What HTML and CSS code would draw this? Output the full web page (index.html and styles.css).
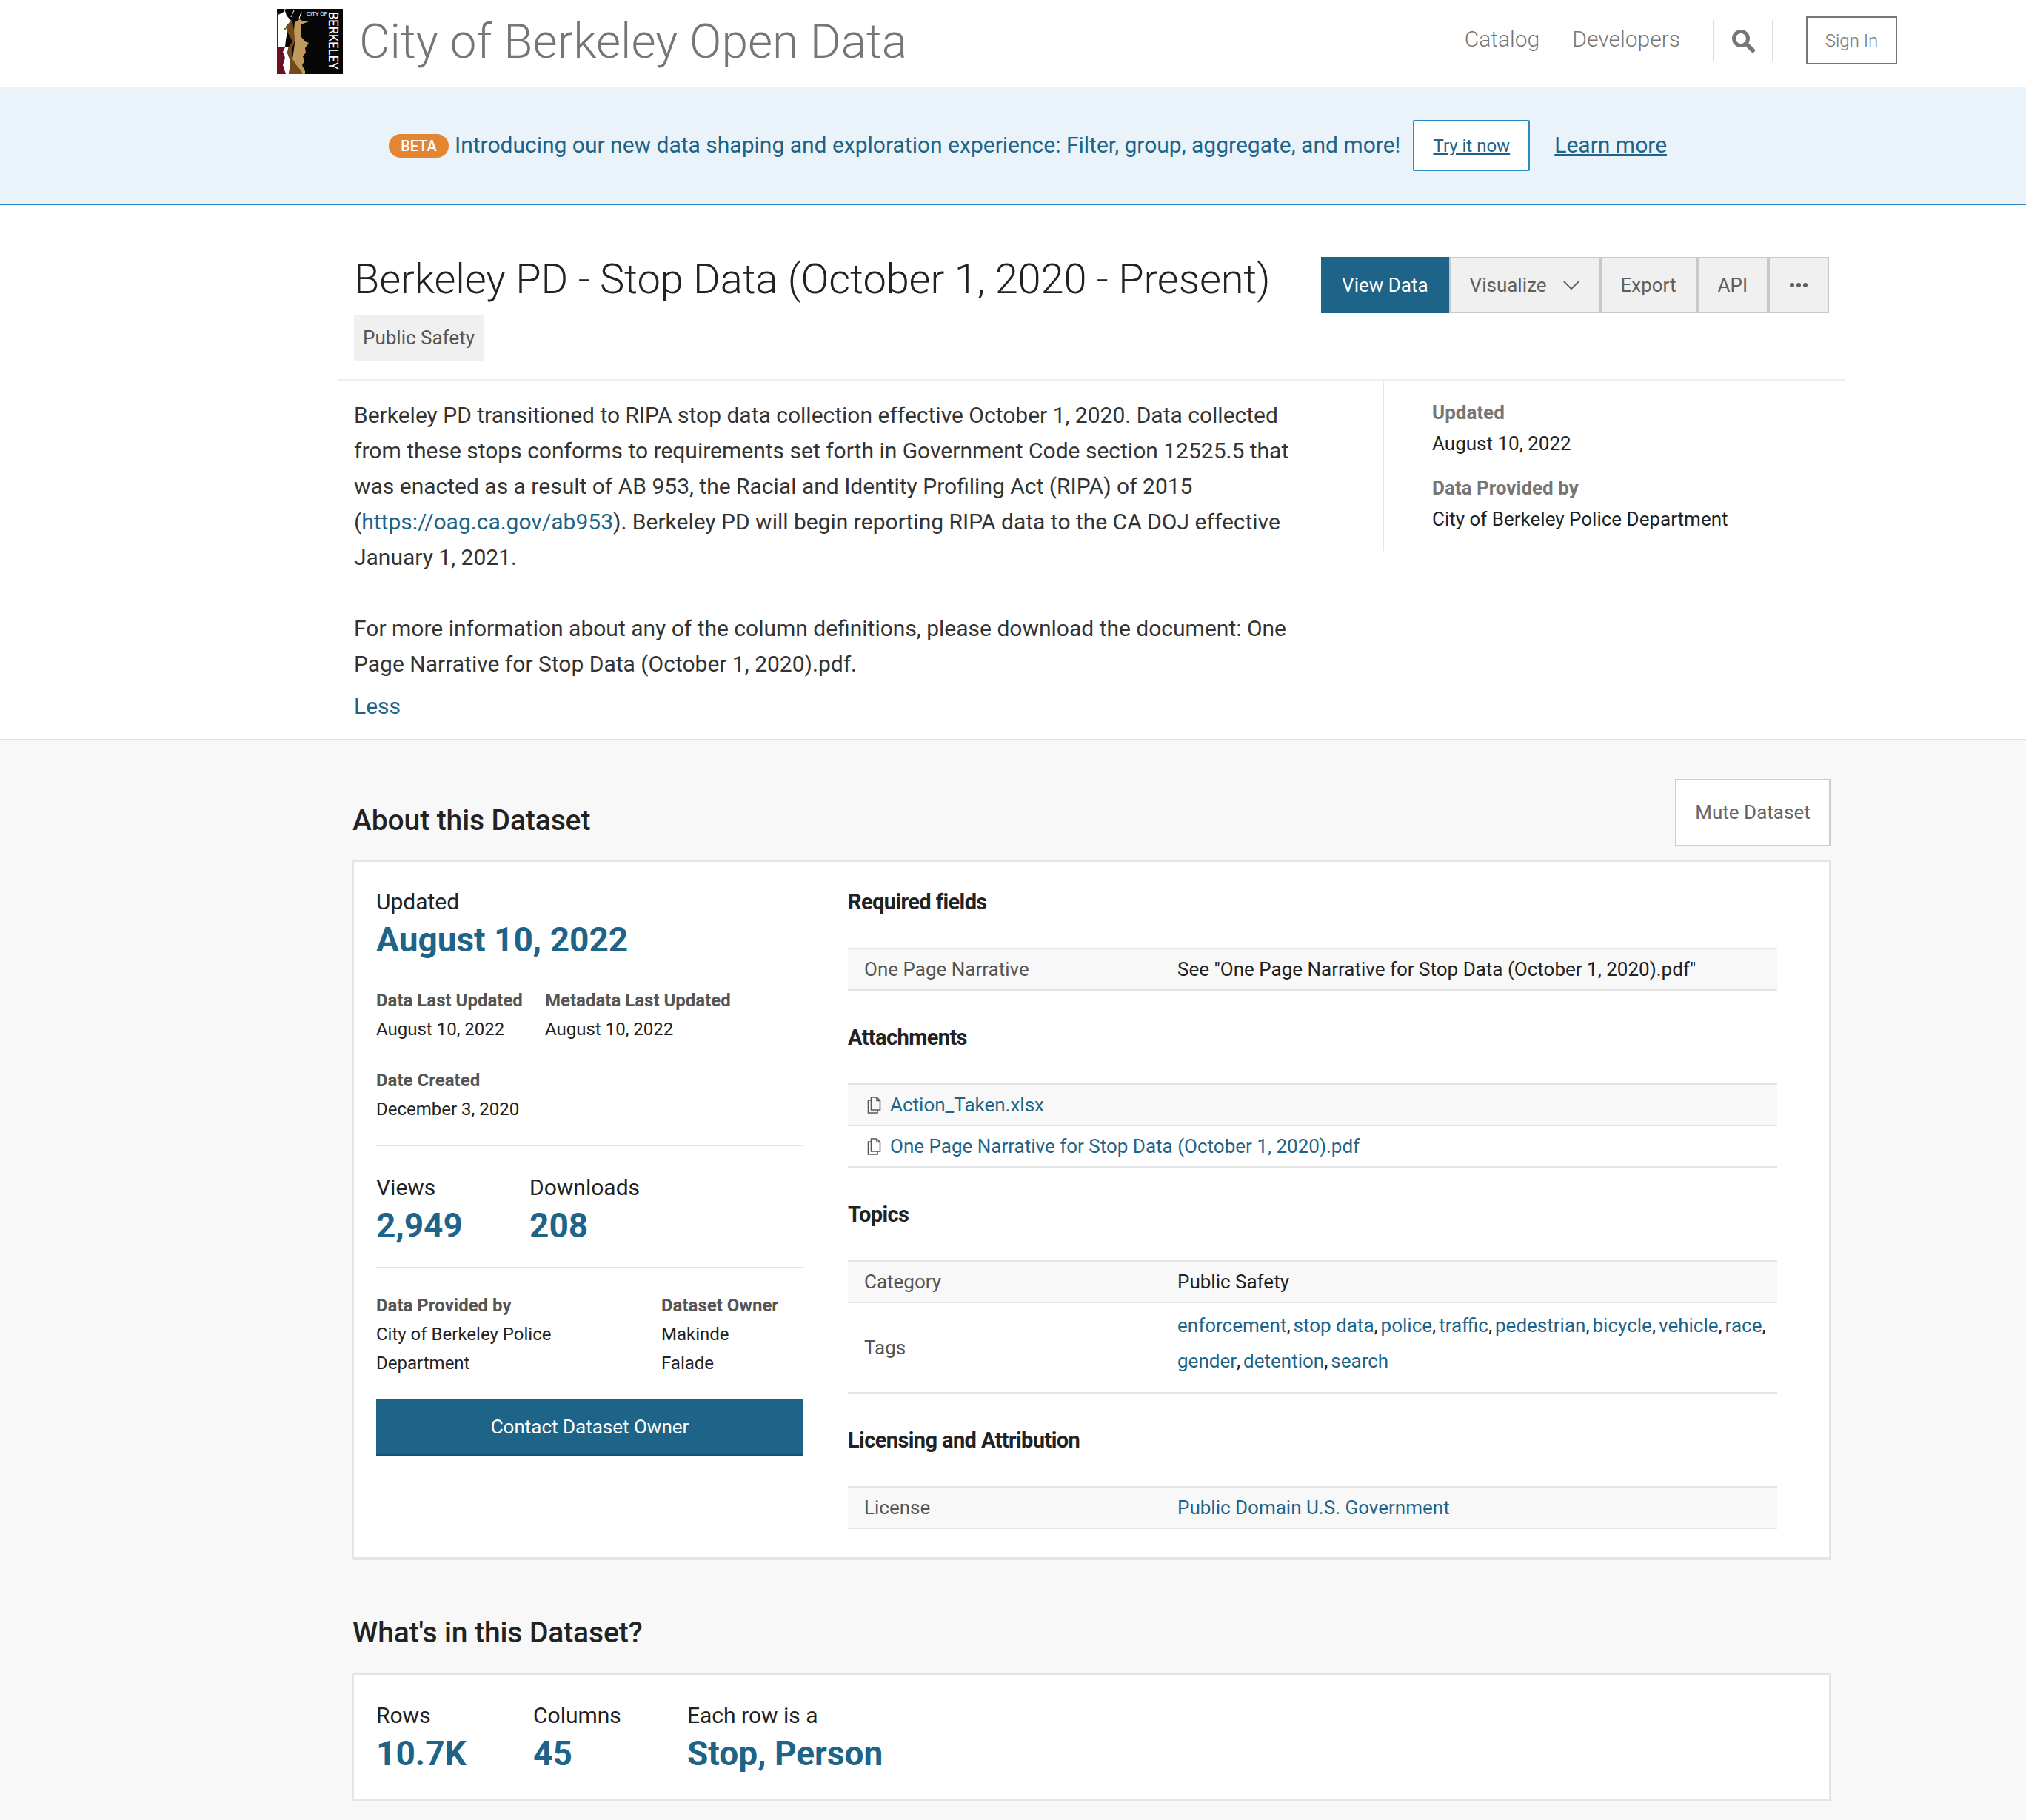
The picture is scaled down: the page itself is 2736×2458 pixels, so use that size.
FILE: index.html
```html
<!DOCTYPE html>
<html lang="en">
<head>
    <meta charset="UTF-8">
    <title>Berkeley PD - Stop Data (October 1, 2020 - Present)</title>
    <link rel="stylesheet" href="styles.css">
</head>
<body>
    <header class="site-header">
        <svg class="logo" viewBox="0 0 89 88" role="img" aria-label="City of Berkeley">
            <rect width="89" height="88" fill="#060606"/>
            <path d="M0 6H4V51H13L8 58 11 66 8 76 12 88H0Z" fill="#6b1020"/>
            <path d="M2 8 11 3 13 9 19 16 12 24 14 31 12 42 11 51H2Z" fill="#fff"/>
            <path d="M11 52 16 51 14 59 17 68 18 76 16 88H12L8 76 11 66 8 58Z" fill="#fff"/>
            <path d="M20 14 21 18 23 29 24 44 21 52 21 68 26 76 33 84 34 88H16L18 76 17 68 14 59 16 51 21 44 14 31 12 24 19 16Z" fill="#76491d"/>
            <path d="M24 18 31 14 34 16 43 17 33 21 33 38 38 44 43 46 38 53 39 59 35 64 37 71 34 76 38 84 38 88H34L33 84 26 76 21 68 23 54 24 46 23 29Z" fill="#c09a5a"/>
            <path d="M11 0 9 6M23 2 19 11M33 4 30 13" stroke="#fff" stroke-width="1" fill="none"/>
            <circle cx="11" cy="27" r="1.2" fill="#4d7a22"/>
            <text class="logo-small" x="40" y="9" textLength="28">CITY OF</text>
            <text class="logo-big" transform="translate(70 4) rotate(90)" textLength="78" lengthAdjust="spacingAndGlyphs">BERKELEY</text>
        </svg>
        <a class="site-name">City of Berkeley Open Data</a>
        <nav class="site-nav">
            <a>Catalog</a>
            <a>Developers</a>
        </nav>
        <div class="search-box">
            <svg viewBox="0 0 32 32" class="search-icon"><circle cx="13" cy="13" r="9.5" fill="none" stroke="#767676" stroke-width="5"/><path d="M20 20 29 29" stroke="#767676" stroke-width="6" stroke-linecap="round"/></svg>
        </div>
        <a class="sign-in">Sign In</a>
    </header>

    <div class="beta-banner">
        <span class="beta-tag">BETA</span>
        <span class="beta-text">Introducing our new data shaping and exploration experience: Filter, group, aggregate, and more!</span>
        <a class="try-btn">Try it now</a>
        <a class="learn-link">Learn more</a>
    </div>

    <section class="info-pane">
        <div class="title-row">
            <div>
                <h1>Berkeley PD - Stop Data (October 1, 2020 - Present)</h1>
                <span class="category-tag">Public Safety</span>
            </div>
            <div class="actions">
                <a class="action primary">View Data</a>
                <a class="action visualize">Visualize
                    <svg viewBox="0 0 24 14" class="chevron"><path d="M1 1 12 12 23 1" fill="none" stroke="#5f5f5f" stroke-width="2"/></svg>
                </a>
                <a class="action">Export</a>
                <a class="action">API</a>
                <a class="action more"><i></i><i></i><i></i></a>
            </div>
        </div>
        <div class="desc-row">
            <div class="description">
                <p>Berkeley PD transitioned to RIPA stop data collection effective October 1, 2020. Data collected from these stops conforms to requirements set forth in Government Code section 12525.5 that was enacted as a result of AB 953, the Racial and Identity Profiling Act (RIPA) of 2015 (<a>https://oag.ca.gov/ab953</a>). Berkeley PD will begin reporting RIPA data to the CA DOJ effective January 1, 2021.</p>
                <p>For more information about any of the column definitions, please download the document: One Page Narrative for Stop Data (October 1, 2020).pdf.</p>
                <a class="less">Less</a>
            </div>
            <aside class="meta-side">
                <dl>
                    <dt>Updated</dt>
                    <dd>August 10, 2022</dd>
                    <dt>Data Provided by</dt>
                    <dd>City of Berkeley Police Department</dd>
                </dl>
            </aside>
        </div>
    </section>

    <main class="lower">
        <div class="section-head">
            <h2>About this Dataset</h2>
            <a class="mute-btn">Mute Dataset</a>
        </div>
        <div class="card about-card">
            <div class="about-left">
                <div class="stat-label">Updated</div>
                <div class="stat-big">August 10, 2022</div>
                <div class="small-grid first">
                    <div class="small-item date-a">
                        <b>Data Last Updated</b>
                        <span>August 10, 2022</span>
                    </div>
                    <div class="small-item">
                        <b>Metadata Last Updated</b>
                        <span>August 10, 2022</span>
                    </div>
                </div>
                <div class="small-item created">
                    <b>Date Created</b>
                    <span>December 3, 2020</span>
                </div>
                <hr>
                <div class="stat-row">
                    <div class="views">
                        <div class="stat-label">Views</div>
                        <div class="stat-big">2,949</div>
                    </div>
                    <div>
                        <div class="stat-label">Downloads</div>
                        <div class="stat-big">208</div>
                    </div>
                </div>
                <hr class="second">
                <div class="small-grid owners">
                    <div class="small-item provided">
                        <b>Data Provided by</b>
                        <span>City of Berkeley Police Department</span>
                    </div>
                    <div class="small-item owner">
                        <b>Dataset Owner</b>
                        <span>Makinde Falade</span>
                    </div>
                </div>
                <a class="contact-btn">Contact Dataset Owner</a>
            </div>
            <div class="about-right">
                <h3>Required fields</h3>
                <div class="meta-table">
                    <div class="row shaded"><span class="key">One Page Narrative</span><span class="val">See "One Page Narrative for Stop Data (October 1, 2020).pdf"</span></div>
                </div>
                <h3>Attachments</h3>
                <div class="meta-table">
                    <div class="row shaded attach">
                        <svg class="file-icon" viewBox="0 0 19 23"><path d="M5.5 1H13L17.5 5.5V18H5.5Z M13 1V5.5H17.5 M5.5 5H1.5V22H14V18" fill="none" stroke="#555" stroke-width="1.6"/></svg>
                        <a>Action_Taken.xlsx</a>
                    </div>
                    <div class="row attach">
                        <svg class="file-icon" viewBox="0 0 19 23"><path d="M5.5 1H13L17.5 5.5V18H5.5Z M13 1V5.5H17.5 M5.5 5H1.5V22H14V18" fill="none" stroke="#555" stroke-width="1.6"/></svg>
                        <a>One Page Narrative for Stop Data (October 1, 2020).pdf</a>
                    </div>
                </div>
                <h3>Topics</h3>
                <div class="meta-table">
                    <div class="row shaded"><span class="key">Category</span><span class="val">Public Safety</span></div>
                    <div class="row tags-row">
                        <span class="key">Tags</span>
                        <span class="val tags"><a>enforcement</a>, <a>stop data</a>, <a>police</a>, <a>traffic</a>, <a>pedestrian</a>, <a>bicycle</a>, <a>vehicle</a>, <a>race</a>, <a>gender</a>, <a>detention</a>, <a>search</a></span>
                    </div>
                </div>
                <h3>Licensing and Attribution</h3>
                <div class="meta-table">
                    <div class="row shaded"><span class="key">License</span><span class="val"><a>Public Domain U.S. Government</a></span></div>
                </div>
            </div>
        </div>

        <h2 class="whats-title">What's in this Dataset?</h2>
        <div class="card whats-card">
            <div class="rows-col">
                <div class="stat-label">Rows</div>
                <div class="stat-big">10.7K</div>
            </div>
            <div class="cols-col">
                <div class="stat-label">Columns</div>
                <div class="stat-big">45</div>
            </div>
            <div>
                <div class="stat-label">Each row is a</div>
                <div class="stat-big">Stop, Person</div>
            </div>
        </div>
    </main>
</body>
</html>
```

FILE: styles.css
```css
* {
    box-sizing: border-box;
}

body {
    margin: 0;
    height: 2458px;
    overflow: hidden;
    background-color: #f8f8f8;
    color: #222;
    font-family: Roboto, "Liberation Sans", sans-serif;
    font-size: 28px;
}

a {
    color: #1e6488;
}

/* header */
.site-header {
    display: flex;
    align-items: center;
    height: 118px;
    padding: 0 174px 9px 374px;
    background-color: #fff;
}

.logo {
    width: 89px;
    height: 88px;
    margin: 3px 22px 0 0;
}

.logo-small {
    fill: #fff;
    font-size: 8px;
}

.logo-big {
    fill: #fff;
    font-size: 18px;
}

.site-name {
    flex: 1;
    margin-top: 3px;
    color: #767676;
    font-size: 64px;
    font-weight: 300;
}

.site-nav {
    display: flex;
    gap: 44px;
    margin: 0 44px 4px 0;
}

.site-nav a {
    color: #767676;
    font-size: 30px;
    font-weight: 300;
}

.search-box {
    display: flex;
    align-items: center;
    justify-content: center;
    width: 82px;
    height: 56px;
    border-left: 2px solid #ddd;
    border-right: 2px solid #ddd;
    margin-right: 44px;
}

.search-icon {
    width: 32px;
    height: 32px;
}

.sign-in {
    display: flex;
    align-items: center;
    justify-content: center;
    width: 123px;
    height: 65px;
    border: 2px solid #767676;
    color: #767676;
    font-size: 24px;
    font-weight: 300;
}

/* banner */
.beta-banner {
    display: flex;
    align-items: center;
    height: 159px;
    padding-left: 525px;
    background-color: #eaf3f9;
    border-bottom: 2px solid #2a8bc4;
}

.beta-tag {
    display: inline-flex;
    align-items: center;
    justify-content: center;
    width: 81px;
    height: 32px;
    margin-right: 8px;
    border-radius: 16px;
    background-color: #e38532;
    color: #fff;
    font-size: 20px;
    font-weight: 500;
}

.beta-text {
    margin-bottom: 2px;
    color: #1e6488;
    font-size: 30px;
}

.try-btn {
    display: flex;
    align-items: center;
    justify-content: center;
    width: 158px;
    height: 69px;
    margin: 0 33px 0 17px;
    border: 2px solid #2a8bc4;
    border-radius: 2px;
    background-color: #fff;
    font-size: 24px;
    text-decoration: underline;
}

.learn-link {
    margin-bottom: 2px;
    font-size: 30px;
    text-decoration: underline;
}

/* title and description */
.info-pane {
    height: 723px;
    padding: 70px 0 0 478px;
    background-color: #fff;
    border-bottom: 2px solid #dfdfdf;
}

.title-row {
    display: flex;
    justify-content: space-between;
    align-items: flex-start;
    width: 1992px;
    height: 165px;
}

h1 {
    margin: 0 0 18px;
    font-size: 56px;
    font-weight: 300;
    line-height: 60px;
    letter-spacing: -0.14px;
    white-space: nowrap;
}

.category-tag {
    display: inline-block;
    height: 62px;
    padding: 0 12px;
    background-color: #f0f0f0;
    color: #555;
    font-size: 26px;
    line-height: 62px;
}

.actions {
    display: flex;
    flex: none;
}

.action {
    display: flex;
    align-items: center;
    height: 76px;
    padding: 0 26px;
    border: 2px solid #c8c8c8;
    background-color: #f0f0f0;
    color: #5f5f5f;
    font-size: 26px;
    white-space: nowrap;
}

.action.primary {
    padding: 0 28px;
    border: none;
    background-color: #1e6488;
    color: #fff;
}

.visualize {
    gap: 22px;
}

.chevron {
    width: 22px;
    height: 13px;
}

.action.more {
    gap: 3px;
    padding: 0 27px;
}

.more i {
    width: 6px;
    height: 6px;
    border-radius: 50%;
    background-color: #5f5f5f;
}

.desc-row {
    display: flex;
    width: 2014px;
    margin-left: -23px;
    position: relative;
}

.desc-row::before {
    content: "";
    position: absolute;
    top: 0;
    left: 0;
    width: 2037px;
    border-top: 2px solid #eee;
}

.description {
    width: 1412px;
    padding: 25px 70px 0 23px;
    color: #333;
    font-size: 30px;
    line-height: 48px;
}

.description p {
    margin: 0 0 48px;
}

.description p + p {
    margin-bottom: 9px;
}

.less {
    display: block;
    line-height: 48px;
}

.meta-side {
    height: 232px;
    padding: 24px 0 0 65px;
    border-left: 2px solid #e5e5e5;
}

.meta-side dl {
    margin: 0;
}

.meta-side dt {
    color: #767676;
    font-size: 26px;
    font-weight: 700;
    line-height: 42px;
}

.meta-side dd {
    margin: 0 0 18px;
    color: #222;
    font-size: 26px;
    line-height: 42px;
}

/* lower part */
.lower {
    width: 1996px;
    margin-left: 476px;
}

.section-head {
    display: flex;
    justify-content: space-between;
    align-items: flex-end;
    height: 91px;
    margin-top: 52px;
}

h2 {
    margin: 0;
    font-size: 39px;
    font-weight: 500;
    color: #222;
    line-height: 46px;
    letter-spacing: -0.1px;
}

.section-head h2 {
    margin-bottom: 12px;
}

.mute-btn {
    display: flex;
    align-items: center;
    justify-content: center;
    width: 210px;
    height: 91px;
    padding-bottom: 2px;
    border: 2px solid #ccc;
    background-color: #fff;
    color: #666;
    font-size: 26px;
}

.card {
    background-color: #fff;
    border: 2px solid #e5e5e5;
    border-bottom-width: 4px;
}

.about-card {
    display: flex;
    height: 945px;
    margin-top: 19px;
}

.about-left {
    width: 670px;
    padding: 36px 63px 0 30px;
    flex: none;
}

.stat-label {
    font-size: 30px;
    line-height: 36px;
    color: #222;
}

.stat-big {
    color: #1e6488;
    font-size: 46px;
    font-weight: 700;
    line-height: 66px;
}

.small-grid {
    display: flex;
}

.small-grid.first {
    margin-top: 30px;
}

.small-item b {
    display: block;
    color: #555;
    font-size: 24px;
    font-weight: 700;
    line-height: 39px;
}

.small-item span {
    display: block;
    color: #222;
    font-size: 24px;
    line-height: 39px;
}

.date-a {
    width: 228px;
}

.created {
    margin-top: 30px;
}

.about-left hr {
    margin: 28px 0 0;
    border: none;
    border-top: 2px solid #e5e5e5;
}

.about-left hr.second {
    margin-top: 23px;
}

.stat-row {
    display: flex;
    margin-top: 38px;
}

.views {
    width: 207px;
}

.owners {
    margin-top: 31px;
}

.provided {
    width: 385px;
}

.provided span {
    max-width: 300px;
}

.owner span {
    max-width: 140px;
}

.contact-btn {
    display: flex;
    align-items: center;
    justify-content: center;
    height: 77px;
    margin-top: 28px;
    background-color: #1e6488;
    border-bottom: 2px solid #14506f;
    color: #fff;
    font-size: 26px;
}

.about-right {
    width: 1255px;
    margin-left: -3px;
    margin-top: -9px;
}

h3 {
    display: flex;
    align-items: center;
    height: 125px;
    margin: 0;
    color: #222;
    font-size: 29px;
    font-weight: 700;
    letter-spacing: -0.6px;
}

.meta-table {
    border-top: 2px solid #e5e5e5;
}

.row {
    display: flex;
    align-items: center;
    min-height: 56px;
    border-bottom: 2px solid #e5e5e5;
    font-size: 26px;
}

.row.shaded {
    background-color: #f8f8f8;
}

.key {
    width: 445px;
    padding-left: 22px;
    color: #555;
    flex: none;
}

.val {
    color: #222;
}

.val a {
    text-decoration: none;
}

.attach {
    padding-left: 26px;
}

.attach a {
    margin-left: 12px;
}

.file-icon {
    width: 19px;
    height: 23px;
}

.tags-row {
    height: 122px;
}

.tags {
    padding-bottom: 12px;
    line-height: 48px;
    word-spacing: -2.5px;
}

.tags a {
    word-spacing: 0;
}

.whats-title {
    margin-top: 75px;
}

.whats-card {
    display: flex;
    height: 173px;
    margin-top: 32px;
    padding: 37px 30px 0;
}

.rows-col {
    width: 212px;
}

.cols-col {
    width: 208px;
}
```
